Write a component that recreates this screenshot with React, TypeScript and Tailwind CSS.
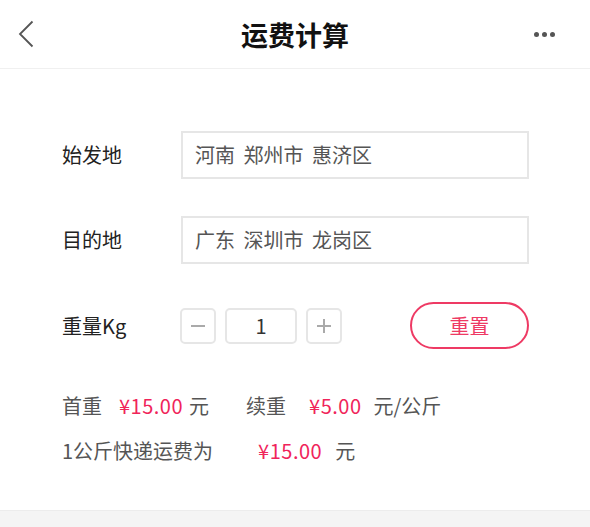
import React from "react";

export default function App() {
  const font = { fontFamily: '"Noto Sans CJK SC", "Noto Sans", sans-serif' };
  return (
    <div className="w-[590px] h-[527px] bg-white flex flex-col overflow-hidden" style={font}>
      <div className="h-[69px] shrink-0 border-b border-[#f0f0f0] grid grid-cols-[1fr_auto_1fr] items-center px-[18px]">
        <svg width="16" height="28" viewBox="0 0 16 28" className="shrink-0">
          <path d="M14.5 1.5 L2 14 L14.5 26.5" fill="none" stroke="#555" strokeWidth="1.8" />
        </svg>
        <div className="text-[27px] font-semibold text-[#111] leading-none">运费计算</div>
        <div className="justify-self-end mr-[17px] flex gap-[3px] items-center">
          <span className="w-[5px] h-[5px] rounded-full bg-[#555]" />
          <span className="w-[5px] h-[5px] rounded-full bg-[#555]" />
          <span className="w-[5px] h-[5px] rounded-full bg-[#555]" />
        </div>
      </div>

      <div className="flex-1 pl-[62px] pr-[61px] pt-[62px]">
        <div className="flex items-center h-[48px]">
          <div className="w-[119px] text-[20px] text-[#222]">始发地</div>
          <div className="flex-1 h-[48px] border-2 border-[#e6e6e6] flex items-center pl-[12px] text-[20px] text-[#555] [word-spacing:4px]">
            河南 郑州市 惠济区
          </div>
        </div>
        <div className="flex items-center h-[48px] mt-[37px]">
          <div className="w-[119px] text-[20px] text-[#222]">目的地</div>
          <div className="flex-1 h-[48px] border-2 border-[#e6e6e6] flex items-center pl-[12px] text-[20px] text-[#555] [word-spacing:4px]">
            广东 深圳市 龙岗区
          </div>
        </div>
        <div className="flex items-center h-[47px] mt-[38px]">
          <div className="w-[118px] text-[20px] text-[#222]">重量Kg</div>
          <div className="flex items-center gap-[9px]">
            <div className="w-[36px] h-[36px] rounded-[5px] border-2 border-[#e6e6e6] flex items-center justify-center">
              <span className="block w-[14px] h-[2px] bg-[#aaa]" />
            </div>
            <div className="w-[72px] h-[36px] rounded-[5px] border-2 border-[#e6e6e6] flex items-center justify-center text-[20px] text-[#333]">
              1
            </div>
            <div className="w-[36px] h-[36px] rounded-[5px] border-2 border-[#e6e6e6] flex items-center justify-center relative">
              <span className="block w-[14px] h-[2px] bg-[#aaa]" />
              <span className="absolute block w-[2px] h-[14px] bg-[#aaa]" />
            </div>
          </div>
          <div className="ml-auto w-[119px] h-[47px] rounded-full border-2 border-[#ee3a64] flex items-center justify-center text-[20px] text-[#ee3a64]">
            重置
          </div>
        </div>

        <div className="mt-[42px] text-[20px] leading-[30px] text-[#555] flex items-center">
          <span>首重</span>
          <span className="ml-[17px] text-[#f0245a] tracking-[0.5px]">¥15.00</span>
          <span className="ml-[6px]">元</span>
          <span className="ml-[37px]">续重</span>
          <span className="ml-[23px] text-[#f0245a] tracking-[0.5px]">¥5.00</span>
          <span className="ml-[12px]">元/公斤</span>
        </div>
        <div className="mt-[15px] text-[20px] leading-[30px] text-[#555] flex items-center">
          <span>1公斤快递运费为</span>
          <span className="ml-[45px] text-[#f0245a] tracking-[0.5px]">¥15.00</span>
          <span className="ml-[13px]">元</span>
        </div>
      </div>

      <div className="h-[17px] shrink-0 bg-[#f4f4f4] border-t border-[#ececec]" />
    </div>
  );
}
